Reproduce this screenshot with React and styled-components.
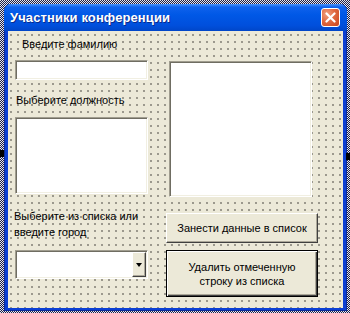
import React from 'react';
import styled, { createGlobalStyle } from 'styled-components';

const GlobalStyle = createGlobalStyle`
  html, body {
    margin: 0;
    padding: 0;
  }
  body {
    font-family: "Liberation Sans", Arial, sans-serif;
  }
`;

const hatch = `repeating-conic-gradient(#1c1f4a 0 25%, #e6e6ee 0 50%) 0 0 / 2px 2px`;

const Page = styled.div`
  position: relative;
  width: 350px;
  height: 313px;
  box-sizing: border-box;
  padding: 4px 3px 2px 4px;
  background: ${hatch};
  overflow: hidden;
`;

const Handle = styled.div`
  position: absolute;
  top: ${p => p.$top}px;
  left: ${p => p.$left}px;
  width: 4px;
  height: 7px;
  background: #000;
`;

const Window = styled.div`
  width: 343px;
  height: 307px;
  display: flex;
  flex-direction: column;
  background: #0b3fd4;
  border-radius: 7px 7px 0 0;
  box-shadow: inset 0 0 0 1px #0a2a9a;
  overflow: hidden;
`;

const TitleBar = styled.div`
  height: 27px;
  flex: none;
  display: flex;
  align-items: center;
  justify-content: space-between;
  padding: 0 7px 0 6px;
  background: linear-gradient(#4a94f8 0, #0f62ec 3px, #0058e6 40%, #004fdc 80%, #0046c8 100%);
`;

const Title = styled.span`
  color: #fff;
  font-family: "Liberation Sans", Arial, sans-serif;
  font-weight: bold;
  font-size: 13px;
  letter-spacing: 0.1px;
  text-shadow: 1px 1px 0 #0a2a8c;
`;

const CloseButton = styled.div`
  width: 19px;
  height: 19px;
  box-sizing: border-box;
  border: 1px solid #fff;
  border-radius: 3px;
  background: radial-gradient(circle at 30% 30%, #f0a080 0, #e06a42 45%, #c8441c 100%);
  display: flex;
  align-items: center;
  justify-content: center;
`;

const Frame = styled.div`
  flex: 1;
  display: flex;
  padding: 0 4px 3px 4px;
`;

const Client = styled.div`
  flex: 1;
  display: flex;
  gap: 18px;
  padding: 6px 0 0 7px;
  background-color: #ece9d8;
  background-image: radial-gradient(circle at 1px 1px, #858378 0.6px, transparent 1.1px);
  background-size: 7px 7px;
  background-position: 2px 3px;
`;

const Column = styled.div`
  width: ${p => p.$width}px;
  display: flex;
  flex-direction: column;
`;

const Label = styled.div`
  font-size: 11px;
  line-height: ${p => p.$lh || 15}px;
  white-space: nowrap;
  color: #000;
  margin-top: ${p => p.$mt || 0}px;
  margin-left: ${p => p.$ml || 0}px;
`;

const Sunken = styled.div`
  position: relative;
  box-sizing: border-box;
  background: #fff;
  height: ${p => p.$h}px;
  width: ${p => (p.$w ? `${p.$w}px` : 'auto')};
  margin-top: ${p => p.$mt || 0}px;
  margin-left: ${p => p.$ml || 0}px;
  border: 1px solid;
  border-color: #a09d8f #fff #fff #a09d8f;
  box-shadow: inset 1px 1px 0 #6f6d62, inset -1px -1px 0 #f1efe2;
  display: flex;
  justify-content: flex-end;
`;

const DropButton = styled.div`
  width: 14px;
  box-sizing: border-box;
  margin: 1px 1px 1px 0;
  background: #ece9d8;
  border: 1px solid;
  border-color: #fff #404040 #404040 #fff;
  box-shadow: inset -1px -1px 0 #aca899;
  display: flex;
  align-items: center;
  justify-content: center;

  &::after {
    content: '';
    border-left: 3.5px solid transparent;
    border-right: 3.5px solid transparent;
    border-top: 4px solid #000;
  }
`;

const Button = styled.div`
  box-sizing: border-box;
  height: ${p => p.$h}px;
  margin-top: ${p => p.$mt || 0}px;
  background: #ece9d8;
  border: 1px solid;
  border-color: ${p => (p.$default ? '#000' : '#fff #404040 #404040 #fff')};
  box-shadow: ${p =>
    p.$default
      ? 'inset 1px 1px 0 #fff, inset -1px -1px 0 #404040, inset -2px -2px 0 #aca899'
      : 'inset -1px -1px 0 #aca899'};
  display: flex;
  align-items: center;
  justify-content: center;
  text-align: center;
  font-size: 11px;
  line-height: 14px;
  color: #000;
`;

export default function App() {
  return (
    <>
      <GlobalStyle />
      <Page>
        <Handle $top={150} $left={0} />
        <Handle $top={153} $left={346} />
        <Window>
          <TitleBar>
            <Title>Участники конференции</Title>
            <CloseButton>
              <svg width="11" height="11" viewBox="0 0 11 11">
                <path d="M1.5 1.5 L9.5 9.5 M9.5 1.5 L1.5 9.5" stroke="#fff" strokeWidth="2.2" strokeLinecap="round" />
              </svg>
            </CloseButton>
          </TitleBar>
          <Frame>
            <Client>
              <Column $width={133}>
                <Label $ml={7}>Введите фамилию</Label>
                <Sunken $h={20} $mt={8} />
                <Label $mt={13} $ml={1}>Выберите должность</Label>
                <Sunken $h={77} $mt={9} />
                <Label $mt={14} $ml={-1} $lh={16}>
                  Выберите из списка или
                  <br />
                  введите город
                </Label>
                <Sunken $h={29} $mt={10}>
                  <DropButton />
                </Sunken>
              </Column>
              <Column $width={152}>
                <Sunken $h={136} $w={143} $mt={24} $ml={3} />
                <Button $h={30} $mt={16}>Занести данные в список</Button>
                <Button $h={47} $mt={7} $default>
                  Удалить отмеченную
                  <br />
                  строку из списка
                </Button>
              </Column>
            </Client>
          </Frame>
        </Window>
      </Page>
    </>
  );
}
